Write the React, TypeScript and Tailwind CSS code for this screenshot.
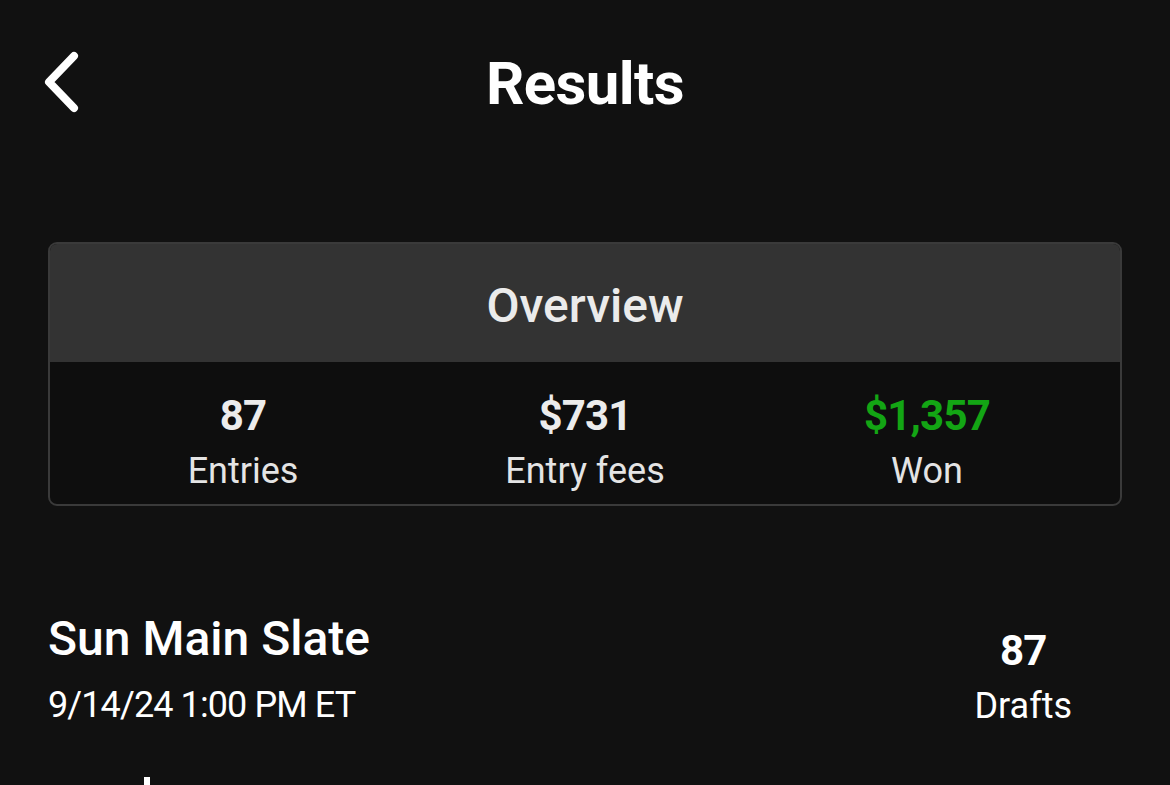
import React from "react";

const roboto = { fontFamily: "Roboto, 'Liberation Sans', sans-serif" };

function Stat({ value, label, green }: { value: string; label: string; green?: boolean }) {
  return (
    <div className="flex flex-col items-center">
      <div
        className={`text-[42px] leading-none font-bold tracking-[-0.02em] ${green ? "text-[#13a514]" : "text-[#ececec]"}`}
      >
        {value}
      </div>
      <div className="mt-[16px] text-[36px] leading-none text-[#e4e4e4]">{label}</div>
    </div>
  );
}

export default function App() {
  return (
    <div className="w-full h-[785px] bg-[#111111] overflow-hidden" style={roboto}>
      {/* Header */}
      <div className="mt-[50px] h-[64px] grid grid-cols-[1fr_auto_1fr] items-center">
        <div className="pl-[40px] flex items-center">
          <svg width="40" height="64" viewBox="0 0 40 64" fill="none">
            <polyline
              points="34,6 9,32 34,58"
              stroke="#ffffff"
              strokeWidth="8"
              strokeLinecap="round"
              strokeLinejoin="round"
            />
          </svg>
        </div>
        <h1 className="pt-[3px] text-[60px] leading-none font-bold text-white tracking-[-0.01em]">Results</h1>
        <div />
      </div>

      {/* Overview card */}
      <div className="mt-[128px] mx-[48px] rounded-[9px] overflow-hidden border-2 border-[#3a3a3a] bg-[#0e0e0e]">
        <div className="h-[118px] bg-[#333333] flex items-center justify-center pt-[6px]">
          <span className="text-[48px] leading-none font-medium text-[#ebebeb]">Overview</span>
        </div>
        <div className="h-[142px] px-[22px] pt-[33px] grid grid-cols-3">
          <Stat value="87" label="Entries" />
          <Stat value="$731" label="Entry fees" />
          <Stat value="$1,357" label="Won" green />
        </div>
      </div>

      {/* Slate row */}
      <div className="mt-[109px] pl-[48px] pr-[98px] flex justify-between">
        <div className="flex flex-col">
          <div className="text-[48px] leading-none font-medium text-white">Sun Main Slate</div>
          <div className="mt-[24px] text-[36px] leading-none text-white tracking-[-0.025em]">9/14/24 1:00 PM ET</div>
        </div>
        <div className="flex flex-col items-center pt-[15px]">
          <div className="text-[42px] leading-none font-bold text-white tracking-[-0.02em]">87</div>
          <div className="mt-[16px] text-[36px] leading-none text-white">Drafts</div>
        </div>
      </div>

      <div className="mt-[53px] pl-[144px]">
        <div className="w-[6px] h-[20px] bg-white" />
      </div>
    </div>
  );
}
